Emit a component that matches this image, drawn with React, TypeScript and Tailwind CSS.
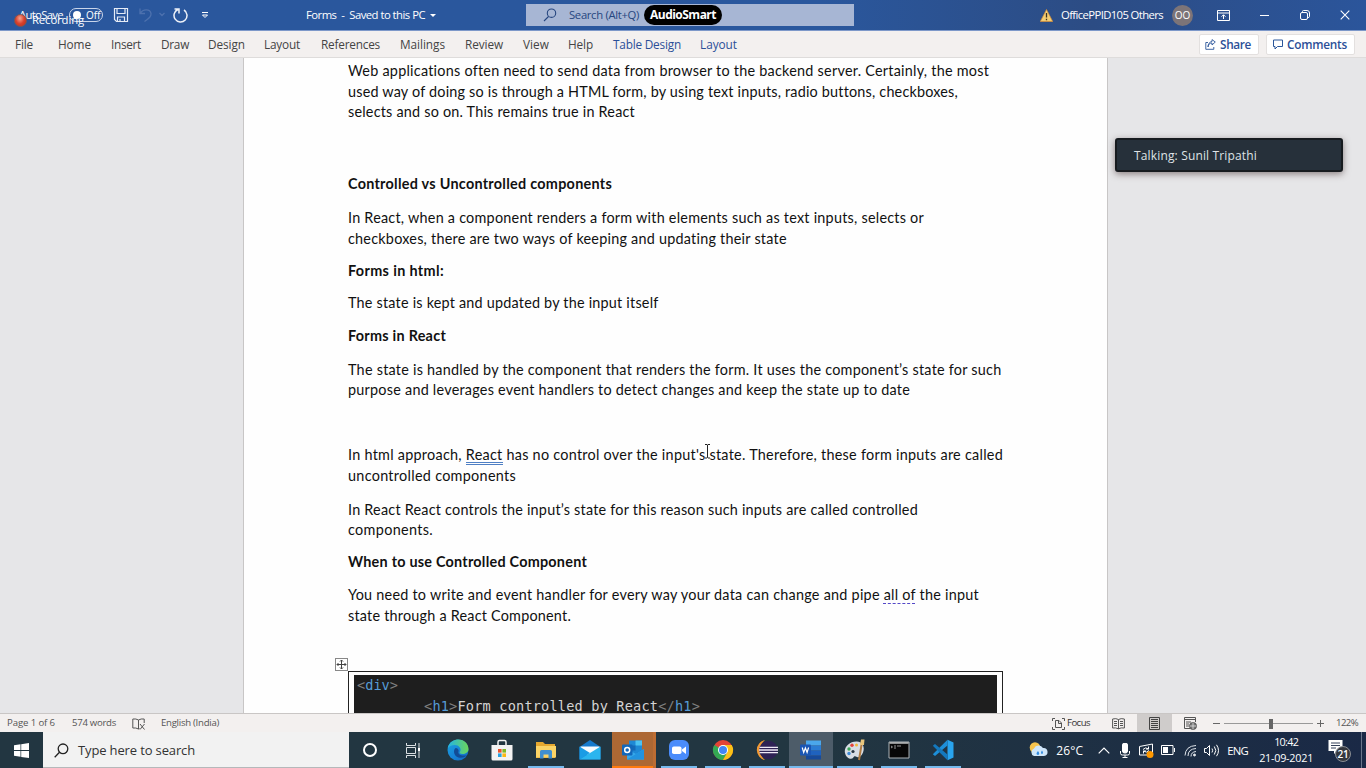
import React, { useLayoutEffect, useRef, useState } from 'react';

/** A single line of text whose tracking is adjusted so that it fills `w` pixels. */
function Fit({ w, className = '', children }: { w: number; className?: string; children: React.ReactNode }) {
  const ref = useRef<HTMLSpanElement>(null);
  const [spacing, setSpacing] = useState(0);
  useLayoutEffect(() => {
    const el = ref.current;
    if (!el) return;
    const n = (el.textContent || '').length;
    if (n > 0) setSpacing((w - el.getBoundingClientRect().width) / n);
  }, [w]);
  return (
    <span ref={ref} style={{ letterSpacing: spacing }} className={'inline-block shrink-0 whitespace-pre ' + className}>
      {children}
    </span>
  );
}

const tabs = [
  { t: 'File', w: 18, c: 'ml-[15px]' },
  { t: 'Home', w: 33, c: 'ml-[25px]' },
  { t: 'Insert', w: 30, c: 'ml-[20px]' },
  { t: 'Draw', w: 28, c: 'ml-[20px]' },
  { t: 'Design', w: 37, c: 'ml-[19px]' },
  { t: 'Layout', w: 36, c: 'ml-[19px]' },
  { t: 'References', w: 59, c: 'ml-[21px]' },
  { t: 'Mailings', w: 45, c: 'ml-[20px]' },
  { t: 'Review', w: 38, c: 'ml-[20px]' },
  { t: 'View', w: 26, c: 'ml-[20px]' },
  { t: 'Help', w: 25, c: 'ml-[19px]' },
  { t: 'Table Design', w: 68, c: 'ml-[20px] text-[#2b4f98]' },
  { t: 'Layout', w: 37, c: 'ml-[19px] text-[#2b4f98]' },
];

function TitleBar() {
  return (
    <div className="relative flex h-[31px] shrink-0 items-center border-b border-[#7d98c9] bg-[#2b569a] bg-linear-to-r from-[#2a579d] from-60% via-[#2c4c84] via-80% to-[#2b559b] text-[11.3px] text-white">
      <Fit w={44} className="ml-[19px]">AutoSave</Fit>
      <div className="ml-[6px] flex h-[14px] w-[34px] items-center rounded-full border border-[#c9d5ea] pl-[3px]">
        <span className="h-[8px] w-[8px] shrink-0 rounded-full bg-white" />
        <span className="ml-[5px] text-[10px] leading-none">Off</span>
      </div>
      <svg className="ml-[10px] h-[16px] w-[16px] shrink-0" viewBox="0 0 16 16" fill="none" stroke="#e6ecf6" strokeWidth="1.2">
        <path d="M1.500 1.500h13v13h-11l-2-2zM4 1.500v5h8v-5M4.500 14.500v-4.500h7v4.500M7 14.500v-2.500" />
      </svg>
      <svg className="ml-[9px] h-[16px] w-[28px] shrink-0" viewBox="0 0 28 16" fill="none" stroke="#4d71ae" strokeWidth="1.3">
        <path d="M2 1.500v5h5M2 6.500C5 2 12 1.500 13 6.500c.5 4-4 6-6.500 8M21.500 6l2.500 2.500 2.500-2.500" />
      </svg>
      <svg className="ml-[7px] h-[18px] w-[16px] shrink-0" viewBox="0 0 16 18" fill="none" stroke="#eef2f9" strokeWidth="1.5">
        <path d="M1.500 3h4.500v4.500M5 3.500A6.500 6.500 0 1 0 11 4" />
      </svg>
      <svg className="ml-[12px] h-[8px] w-[8px] shrink-0" viewBox="0 0 8 8" fill="none" stroke="white">
        <path d="M1 1.500h6M1.500 4L4 6.500 6.500 4z" />
      </svg>
      <Fit w={119} className="ml-[97px]">Forms  -  Saved to this PC</Fit>
      <span className="ml-[5px] h-0 w-0 border-x-[3px] border-t-[3px] border-x-transparent border-t-white" />
      <div className="ml-[90px] flex h-[22px] w-[328px] shrink-0 items-center bg-[#a7b6d4] text-[#26467f]">
        <svg className="ml-[17px] h-[14px] w-[14px]" viewBox="0 0 14 14" fill="none" stroke="#26467f" strokeWidth="1.1">
          <circle cx="8.500" cy="5.200" r="4.200" /><path d="M5.500 8.500L1 13" />
        </svg>
        <Fit w={70} className="ml-[12px]">Search (Alt+Q)</Fit>
        <div className="ml-[5px] flex h-[20px] w-[78px] items-center rounded-full bg-black pl-[6px] text-[12px] font-bold text-white">
          <Fit w={66}>AudioSmart</Fit>
        </div>
      </div>
      <svg className="ml-[186px] h-[13px] w-[13px] shrink-0" viewBox="0 0 13 13">
        <path d="M6.500 .5L12.700 12.500H.3z" fill="#f4cd72" stroke="#d98e35" strokeWidth=".7" /><path d="M6.500 4v4.500M6.500 9.700v1.500" stroke="#3c3320" strokeWidth="1.300" />
      </svg>
      <Fit w={102} className="ml-[8px]">OfficePPID105 Others</Fit>
      <div className="ml-[9px] flex h-[21px] w-[21px] shrink-0 items-center justify-center rounded-full bg-[#7c7478] text-[10px]">OO</div>
      <svg className="ml-[24px] h-[11px] w-[13px] shrink-0" viewBox="0 0 13 11" fill="none" stroke="white"><path d="M.5 .5h12v10H.5zM.5 3h12M6.500 9V5M4.500 6.700l2-2 2 2" /></svg>
      <span className="ml-[30px] h-px w-[9px] bg-white" />
      <svg className="ml-[31px] h-[10px] w-[10px] shrink-0" viewBox="0 0 10 10" fill="none" stroke="white"><rect x=".5" y="2.500" width="7" height="7" rx="1.500" /><path d="M2.500 2V1.500q0-1 1-1H7q2.500 0 2.500 2.500v3.500q0 1-1.500 1" /></svg>
      <svg className="ml-[30px] h-[10px] w-[10px] shrink-0" viewBox="0 0 10 10" stroke="white" strokeWidth="1.100"><path d="M.7 .7l8.600 8.600M9.300 .7L.7 9.300" /></svg>
      <div className="absolute left-[14px] top-[13px] flex items-center">
        <span className="h-[13px] w-[13px] rounded-full border border-[#83544f] bg-radial-[at_45%_30%] from-[#f6a491] via-[#d9412c] to-[#b22c1d]" />
        <Fit w={52} className="ml-[5px] leading-[14px]">Recording</Fit>
      </div>
    </div>
  );
}

function Tabs() {
  return (
    <div className="flex h-[27px] shrink-0 items-center border-b border-[#dedcdb] bg-[#f3f0ef] pt-px text-[11.8px] text-[#444]">
      {tabs.map((t, i) => <Fit key={i} w={t.w} className={t.c}>{t.t}</Fit>)}
      <div className="ml-[462px] flex h-[21px] w-[60px] shrink-0 items-center rounded-[2px] border border-[#e3e0df] bg-white font-semibold text-[#2b4f98]">
        <svg className="ml-[5px] h-[11px] w-[11px]" viewBox="0 0 11 11" fill="none" stroke="#2b569a"><path d="M3 3.500H.8v6.800h8V8M3 8c.3-3 2-4 4-4V6l3.300-3L7 .6V2.500C4.500 2.800 3 5 3 8z" strokeWidth=".9" /></svg>
        <Fit w={31} className="ml-[4px]">Share</Fit>
      </div>
      <div className="ml-[7px] flex h-[21px] w-[89px] shrink-0 items-center rounded-[2px] border border-[#e3e0df] bg-white font-semibold text-[#2b4f98]">
        <svg className="ml-[6px] h-[11px] w-[10px]" viewBox="0 0 10 11" fill="none" stroke="#2b569a"><path d="M.5 1h9v6.500H4.500l-2.500 2.500V7.500H.5z" /></svg>
        <Fit w={60} className="ml-[4px]">Comments</Fit>
      </div>
    </div>
  );
}

type Line = { w: number; t: React.ReactNode };
const paragraphs: { c: string; lines: Line[] }[] = [
  { c: 'h-[113px]', lines: [
    { w: 641, t: 'Web applications often need to send data from browser to the backend server. Certainly, the most' },
    { w: 609.5, t: 'used way of doing so is through a HTML form, by using text inputs, radio buttons, checkboxes,' },
    { w: 287, t: 'selects and so on. This remains true in React' },
  ] },
  { c: 'h-[34px] font-bold', lines: [{ w: 264, t: 'Controlled vs Uncontrolled components' }] },
  { c: 'h-[52.5px]', lines: [
    { w: 576, t: 'In React, when a component renders a form with elements such as text inputs, selects or' },
    { w: 439, t: 'checkboxes, there are two ways of keeping and updating their state' },
  ] },
  { c: 'h-[32.5px] font-bold', lines: [{ w: 96, t: 'Forms in html:' }] },
  { c: 'h-[33px]', lines: [{ w: 310.5, t: 'The state is kept and updated by the input itself' }] },
  { c: 'h-[33.5px] font-bold', lines: [{ w: 98, t: 'Forms in React' }] },
  { c: 'h-[85.5px]', lines: [
    { w: 653.5, t: 'The state is handled by the component that renders the form. It uses the component’s state for such' },
    { w: 562, t: 'purpose and leverages event handlers to detect changes and keep the state up to date' },
  ] },
  { c: 'h-[54.5px]', lines: [
    { w: 655, t: <>In html approach, <span className="relative">React<span className="absolute inset-x-0 bottom-[-2px] h-[3px] border-y border-[#4f7fc4]" /></span> has no control over the input's state. Therefore, these form inputs are called</> },
    { w: 168, t: 'uncontrolled components' },
  ] },
  { c: 'h-[52.5px]', lines: [
    { w: 570, t: 'In React React controls the input’s state for this reason such inputs are called controlled' },
    { w: 85, t: 'components.' },
  ] },
  { c: 'h-[33px] font-bold', lines: [{ w: 239, t: 'When to use Controlled Component' }] },
  { c: 'h-[87px]', lines: [
    { w: 631, t: <>You need to write and event handler for every way your data can change and pipe <span className="underline decoration-[#5448c8] decoration-dashed decoration-1 underline-offset-3">all of</span> the input</> },
    { w: 223, t: 'state through a React Component.' },
  ] },
];

function Doc() {
  return (
    <div className="relative flex h-[655px] shrink-0 justify-start overflow-hidden bg-[#e6e6e8]">
      <div className="ml-[243px] flex h-full w-[865px] shrink-0 flex-col border-x border-[#c8c6c6] bg-[#fefefe] pl-[104px] pt-[3px] font-['Lato','Liberation_Sans',sans-serif] text-[14.4px] leading-[20.7px] text-[#111]">
        {paragraphs.map((p, i) => (
          <div key={i} className={'shrink-0 ' + p.c}>
            {p.lines.map((l, j) => <div key={j} className="h-[20.7px]"><Fit w={l.w}>{l.t}</Fit></div>)}
          </div>
        ))}
        <div className="mt-[-1px] h-[60px] w-[655px] shrink-0 border border-[#222] px-[5px] pt-[3px]">
          <div className="h-full bg-[#1e1e1e] pl-[3px] font-['DejaVu_Sans_Mono',monospace] text-[13.6px] leading-[20.5px] text-[#d4d4d4]">
            <div className="h-[20.5px]"><Fit w={41}><span className="text-[#808080]">&lt;</span><span className="text-[#569cd6]">div</span><span className="text-[#808080]">&gt;</span></Fit></div>
            <div className="h-[20.5px] pl-[67px]"><Fit w={276}><span className="text-[#808080]">&lt;</span><span className="text-[#569cd6]">h1</span><span className="text-[#808080]">&gt;</span>Form controlled by React<span className="text-[#808080]">&lt;/</span><span className="text-[#569cd6]">h1</span><span className="text-[#808080]">&gt;</span></Fit></div>
          </div>
        </div>
      </div>
      <svg className="absolute left-[335px] top-[600px] h-[13px] w-[13px]" viewBox="0 0 13 13" fill="none" stroke="#444"><rect x=".5" y=".5" width="12" height="12" fill="#fff" stroke="#888" /><path d="M6.500 2v9M2 6.500h9M5 3.500l1.500-1.500L8 3.500M5 9.500L6.500 11 8 9.500M3.500 5L2 6.500 3.500 8M9.500 5L11 6.500 9.500 8" /></svg>
      <svg className="absolute left-[704px] top-[386px] h-[15px] w-[8px]" viewBox="0 0 8 15" fill="none" stroke="#222"><path d="M1 .5h2l.5 .5.5-.5h2M3.500 1v12.500M1 14h2l.5-.5.5.5h2" /></svg>
      <div className="absolute left-[1115px] top-[80px] flex h-[34px] w-[228px] items-center rounded-[3px] border-2 border-[#171b1f] bg-[#26303a] pl-[17px] pt-px text-[12px] text-[#dfe3e6] shadow-[0_2px_7px_rgba(60,40,40,.55)]">
        <Fit w={123}>Talking: Sunil Tripathi</Fit>
      </div>
    </div>
  );
}

function Status() {
  return (
    <div className="flex h-[19px] shrink-0 items-center border-t border-[#c9c6c5] bg-[#f3f0ef] pt-px text-[9.6px] text-[#555]">
      <Fit w={48} className="ml-[7px]">Page 1 of 6</Fit>
      <Fit w={44} className="ml-[17px]">574 words</Fit>
      <svg className="ml-[16px] h-[12px] w-[13px] shrink-0" viewBox="0 0 13 12" fill="none" stroke="#555"><path d="M6.500 2Q4 .5 .8 1v9q3-.5 5.700 1zM6.500 2Q9 .5 12.200 1v4M6.500 11l1-.5M8 6l4.500 5.500M12.500 6L8 11.500" /></svg>
      <Fit w={58} className="ml-[16px]">English (India)</Fit>
      <svg className="ml-[833px] h-[12px] w-[13px] shrink-0" viewBox="0 0 13 12" fill="none" stroke="#555"><path d="M3 .5H.5V3M10 .5h2.500V3M3 11.500H.5V9M10 11.500h2.500V9M3.500 2.500H7L9.500 5v4.500h-6zM6.500 2.500v3h3" /></svg>
      <Fit w={23} className="ml-[2px] text-[#333]">Focus</Fit>
      <svg className="ml-[22px] h-[12px] w-[13px] shrink-0" viewBox="0 0 13 12" fill="none" stroke="#555"><path d="M6.500 1.500Q4 0 .6 1v9q3-.6 5.900.8Q9 9.400 12.400 10V1Q9 0 6.500 1.500zv9.500M2 3.500h3M2 5.500h3M2 7.500h3M8 3.500h3M8 5.500h3M8 7.500h3" /></svg>
      <div className="ml-[12px] -mt-px flex h-[18px] w-[35px] shrink-0 items-center justify-center bg-[#cfcccb]">
        <svg className="h-[13px] w-[11px]" viewBox="0 0 11 13" fill="none" stroke="#444"><path d="M.5 .5h10v12H.5zM2 2.500h7M2 4.500h7M2 6.500h7M2 8.500h7M2 10.500h7" /></svg>
      </div>
      <svg className="ml-[12px] h-[13px] w-[13px] shrink-0" viewBox="0 0 13 13" fill="none" stroke="#555"><path d="M6 11.500H.5v-11h11V5M.5 2.500h11M2 5h5M2 7h3M2 9h3" /><circle cx="9" cy="9" r="3.500" fill="#777" /><path d="M5.500 9h7M9 5.500v7" stroke="#eee" strokeWidth=".7" /></svg>
      <span className="ml-[16px] h-px w-[7px] bg-[#666]" />
      <div className="ml-[4px] flex h-[10px] w-[89px] shrink-0 items-center">
        <span className="h-px w-[45px] bg-[#999]" /><span className="h-[10px] w-[4px] bg-[#666]" /><span className="h-px flex-1 bg-[#999]" />
      </div>
      <svg className="ml-[4px] h-[7px] w-[7px] shrink-0" viewBox="0 0 7 7" stroke="#666"><path d="M0 3.500h7M3.500 0v7" /></svg>
      <Fit w={22} className="ml-[12px]">122%</Fit>
    </div>
  );
}

const apps: { bar: string; bg?: string; icon: React.ReactNode }[] = [
  { bar: '', icon: <><defs><linearGradient id="eg" x1="0" y1="0" x2="1" y2="1"><stop offset="0" stopColor="#1ba4df" /><stop offset=".55" stopColor="#1683d8" /><stop offset="1" stopColor="#1464bd" /></linearGradient><linearGradient id="eh"><stop offset="0" stopColor="#23b4e6" /><stop offset="1" stopColor="#6bd65a" /></linearGradient></defs><circle cx="11" cy="11" r="10.500" fill="url(#eg)" /><path d="M.6 9.500C2 3 7 .5 11.500 .5c6 0 10 4.500 10 9.500 0 3.500-3 5-6 5-2.500 0-3.500-1-2.500-2.200C15 9.500 11.500 6 8 6 4.500 6 1.800 7.500 .6 9.500z" fill="url(#eh)" /><path d="M8.500 9C6 11 6.500 17 11.500 18.500c3.500 1 7-.5 8.500-2.500-4 1.500-9.500 0-8.500-3.500C12 11 11 9 8.500 9z" fill="#124c96" /></> },
  { bar: '', icon: <><path d="M7 7V3q0-1.500 1.500-1.500h5Q15 1.500 15 3v4" fill="none" stroke="#f3f3f3" strokeWidth="1.500" /><path d="M.5 6h21v14q0 1.500-1.500 1.500H2Q.5 21.500 .5 20z" fill="#f3f3f3" /><path d="M7 10h3.600v3.600H7z" fill="#e9522b" /><path d="M11.400 10H15v3.600h-3.600z" fill="#7eb928" /><path d="M7 14.400h3.600V18H7z" fill="#28a2e2" /><path d="M11.400 14.400H15V18h-3.600z" fill="#fdb813" /></> },
  { bar: 'bg-[#76b9ed]', icon: <><path d="M1 3h7l2 2h10v14H1z" fill="#e6a82f" /><path d="M1 7h20v11.500H1z" fill="#fbd466" /><path d="M5 19.500v-7q0-1.500 1.500-1.500h9q1.500 0 1.500 1.500v7h-3.500v-4h-5v4z" fill="#3f8fd0" /></> },
  { bar: '', icon: <><path d="M.5 8L11 1l10.500 7v12.500H.5z" fill="#1479cc" /><path d="M1.500 7.500h19v8h-19z" fill="#f7fbfe" /><path d="M.5 7.500L11 14 .5 20.500z" fill="#1a9ce5" /><path d="M21.500 7.500L.5 20.500h21z" fill="#2bb5ef" /></> },
  { bar: 'bg-[#ff7a0e]', bg: 'bg-[#ad6834] border-r-3 border-[#bd6d33]', icon: <><path d="M7 1.500h13v16H7z" fill="#1e88d5" /><path d="M13.500 1.500H20v5h-6.500z" fill="#4cc2f1" /><path d="M7 6.500h6.500v5H7z" fill="#1469b7" /><path d="M5 20.500V10l9 5 8-5v10.500z" fill="#36a8ea" /><path d="M5 20.500l17-10.500v10.500z" fill="#2293df" /><rect y="5.500" width="10.500" height="11" rx="1" fill="#1267ba" /><circle cx="5.200" cy="11" r="2.500" fill="none" stroke="#fff" strokeWidth="1.500" /></> },
  { bar: 'bg-[#76b9ed]', icon: <><rect x="1" y="1" width="20" height="20" rx="6" fill="#4a8cfb" /><rect x="4" y="7.500" width="9.500" height="7.500" rx="1.800" fill="#fff" /><path d="M14 10.500l4-3v7.500l-4-3z" fill="#fff" /></> },
  { bar: 'bg-[#76b9ed]', icon: <><circle cx="11" cy="11" r="10" fill="#e34336" /><path d="M2.300 6A10 10 0 0 0 11 21l4.300-7.500L11 11z" fill="#33a853" /><path d="M11 21a10 10 0 0 0 8.700-15H11l4.300 7.500z" fill="#fbc116" /><circle cx="11" cy="11" r="5" fill="#fff" /><circle cx="11" cy="11" r="4" fill="#4285f4" /></> },
  { bar: 'bg-[#76b9ed]', icon: <><path d="M9 1A10.200 10.200 0 0 0 9 21 13 13 0 0 1 9 1z" fill="#f39a33" /><circle cx="12.500" cy="11" r="9.300" fill="#2e2255" /><path d="M3.500 8.300h18.700M3 11h19.500M3.500 13.700h18.700" stroke="#eee9f6" strokeWidth="1.300" /></> },
  { bar: 'bg-[#76b9ed]', bg: 'bg-[#4d5c69]', icon: <><path d="M6 1.500h15v5H6z" fill="#4ba7eb" /><path d="M6 6.500h15v5H6z" fill="#2b7cd3" /><path d="M6 11.500h15v5H6z" fill="#1f62be" /><path d="M6 16.500h15v4H6z" fill="#174a9a" /><rect y="5.500" width="11" height="11" rx="1" fill="#1a56b4" /><path d="M2.200 8.500l1.500 5 1.700-4.500 1.700 4.500 1.500-5" fill="none" stroke="#fff" strokeWidth="1.200" /></> },
  { bar: 'bg-[#76b9ed]', icon: <><path d="M1 14C-.5 8 6 2 13 2.500c6 .5 8 6 6 11-1.500 4-4 5.500-6 4.500-2-1.200-3-1-4 1C7 21 2 19 1 14z" fill="#d8dde4" /><circle cx="5" cy="10" r="1.700" fill="#3ca85a" /><circle cx="8" cy="6.300" r="1.700" fill="#e5443d" /><circle cx="12.500" cy="6" r="1.500" fill="#f3b73a" /><circle cx="5" cy="14.500" r="1.700" fill="#3f8ad8" /><circle cx="9" cy="12.500" r="1.600" fill="#283542" /><path d="M18 3l-3 18" stroke="#b17c43" strokeWidth="2" /><path d="M16 6l1-5.500 3.500 0L20 6z" fill="#e8c57c" /></> },
  { bar: 'bg-[#76b9ed]', icon: <><path d="M1 3h20v16H1z" fill="#070707" stroke="#aeb4b8" /><path d="M1.500 4h19" stroke="#d9dcde" strokeWidth="1.300" /><path d="M3 7l1.500 1L3 9M6 7h2M9 7h4M6 9h2" fill="none" stroke="#b9b9b9" strokeWidth=".8" /></> },
  { bar: 'bg-[#76b9ed]', icon: <><path d="M15.500 .8L21.500 3.500v15l-6 2.700z" fill="#29a4ee" /><path d="M15.500 .8v5.700L3 17 .8 15.200z" fill="#1d8fd9" /><path d="M15.500 21.200v-5.700L3 5 .8 6.800z" fill="#1478bd" /></> },
];

function Taskbar() {
  return (
    <div className="flex h-[36px] shrink-0 items-center bg-[#22343f] bg-linear-to-r from-[#223641] from-60% to-[#1a2946] text-white">
      <div className="flex h-full w-[43px] shrink-0 items-center justify-center">
        <svg className="h-[15px] w-[15px]" viewBox="0 0 15 15" fill="#fff"><path d="M0 2.200l6.500-.9v5.800H0zM7.200 1.200L15 0v7.100H7.200zM0 7.900h6.500v5.800L0 12.800zM7.200 7.900H15V15l-7.800-1.100z" /></svg>
      </div>
      <div className="flex h-full w-[306px] shrink-0 items-center border-b border-[#b5b8ba] bg-[#f2f2f2] pt-px text-[13px] text-[#333]">
        <svg className="ml-[11px] h-[15px] w-[15px]" viewBox="0 0 15 15" fill="none" stroke="#222" strokeWidth="1.300"><circle cx="9" cy="5.800" r="4.800" /><path d="M5.500 9.300L.7 14.300" /></svg>
        <Fit w={117} className="ml-[9px] pt-px">Type here to search</Fit>
      </div>
      <div className="flex h-full w-[42px] shrink-0 items-center justify-center">
        <span className="h-[14px] w-[14px] rounded-full border-[2.5px] border-white" />
      </div>
      <div className="flex h-full w-[45px] shrink-0 items-center justify-center">
        <svg className="h-[15px] w-[15px]" viewBox="0 0 15 15" fill="none" stroke="#dce1e4"><path d="M.5 0v2.500h9V0M.5 15v-2.500h9V15M.5 4.500h9v6h-9zM13 0v15" /><path d="M12 5h2v3h-2z" fill="#fff" stroke="none" /></svg>
      </div>
      {apps.map((a, i) => (
        <div key={i} className={'flex h-full w-[44.1px] shrink-0 flex-col items-center ' + (a.bg || '')}>
          <svg className="mt-[7px] h-[22px] w-[22px] shrink-0" viewBox="0 0 22 22">{a.icon}</svg>
          <span className={'mt-[5px] h-[2px] ' + (a.bg ? 'w-full ' : 'w-[36px] ') + a.bar} />
        </div>
      ))}
      <svg className="ml-[64px] h-[16px] w-[19px] shrink-0" viewBox="0 0 19 16"><circle cx="6" cy="5.500" r="5.300" fill="#f6c44d" /><path d="M5 14a4 4 0 0 1 0-7.500A5 5 0 0 1 14 6a4 4 0 0 1 1 8z" fill="#cfe6fa" /><path d="M9 9q-3 3.500 0 4 2.500-.5 0-4zM13 8.500q-2 3 0 3.500 2-.5 0-3.500z" fill="#2f8ae0" /></svg>
      <Fit w={27} className="ml-[8px] pt-[2px] text-[12px]">26°C</Fit>
      <svg className="ml-[15px] h-[7px] w-[12px] shrink-0" viewBox="0 0 12 7" fill="none" stroke="#fff" strokeWidth="1.200"><path d="M.7 6.300L6 1l5.300 5.300" /></svg>
      <svg className="ml-[10px] h-[15px] w-[10px] shrink-0" viewBox="0 0 10 15" fill="none" stroke="#fff"><rect x="2.500" y="0" width="5" height="10" rx="2" fill="#fff" /><path d="M.5 8v2.500q0 1.500 2 1.500h5q2 0 2-1.500V8M5 12v3M2.500 14.500h5" /></svg>
      <svg className="ml-[9px] h-[15px] w-[15px] shrink-0" viewBox="0 0 15 15" fill="none" stroke="#fff"><path d="M.5 3.500L13.500 1v11H.5zM4 6.500q2.500-3 5.500-.5M9.500 3.500V6H7M10 7.500q-2.500 3-5.500 .5M4.500 10.500V8H7" /><circle cx="11" cy="11.500" r="3.500" fill="#ff9800" stroke="none" /></svg>
      <svg className="ml-[7px] h-[10px] w-[14px] shrink-0" viewBox="0 0 14 10" fill="none" stroke="#fff"><path d="M.5 .5h11.500v9H.5zM13.500 3v4" /><path d="M2 2h5v6H2z" fill="#fff" stroke="none" /></svg>
      <svg className="ml-[9px] h-[13px] w-[13px] shrink-0" viewBox="0 0 13 13" fill="none" stroke="#dfe4ea"><path d="M1 11.500Q1.500 2 12 1.500M4 12Q4 5 12 4.500M7 12.500Q7 8 12 7.500" /><circle cx="10.500" cy="11" r="1" fill="#fff" /></svg>
      <svg className="ml-[7px] h-[13px] w-[15px] shrink-0" viewBox="0 0 15 13" fill="none" stroke="#fff"><path d="M.5 4.500H2.500L5.500 1.500v10l-3-3h-2zM8 4.500q1.300 2 0 4M10.300 2.500q3 4 0 8M12.500 .8q4 5.700 0 11.400" /></svg>
      <Fit w={21} className="ml-[8px] pt-[2px] text-[11.3px]">ENG</Fit>
      <div className="ml-[11px] flex h-full w-[54px] shrink-0 flex-col items-center pt-[2px] text-[10.8px] leading-[16px]">
        <Fit w={24}>10:42</Fit><Fit w={54}>21-09-2021</Fit>
      </div>
      <div className="relative ml-[15px] h-[22px] w-[23px] shrink-0">
        <svg className="h-[16px] w-[15px]" viewBox="0 0 15 16"><path d="M.5 1h14v11H9l-3 3v-3H.5z" fill="#fff" /><path d="M3 4h9M3 6.500h9M3 9h5" stroke="#34415a" /></svg>
        <span className="absolute left-[7px] top-[7px] flex h-[16px] w-[16px] items-center justify-center rounded-full border border-[#8a8e94] bg-[#35383f] text-[10px] font-semibold">21</span>
      </div>
      <span className="ml-[10px] h-full w-px bg-[#69758a]" />
    </div>
  );
}

export default function App() {
  return (
    <div className="flex h-[768px] w-[1366px] flex-col overflow-hidden font-['Open_Sans','Noto_Sans',sans-serif]">
      <TitleBar />
      <Tabs />
      <Doc />
      <Status />
      <Taskbar />
    </div>
  );
}
